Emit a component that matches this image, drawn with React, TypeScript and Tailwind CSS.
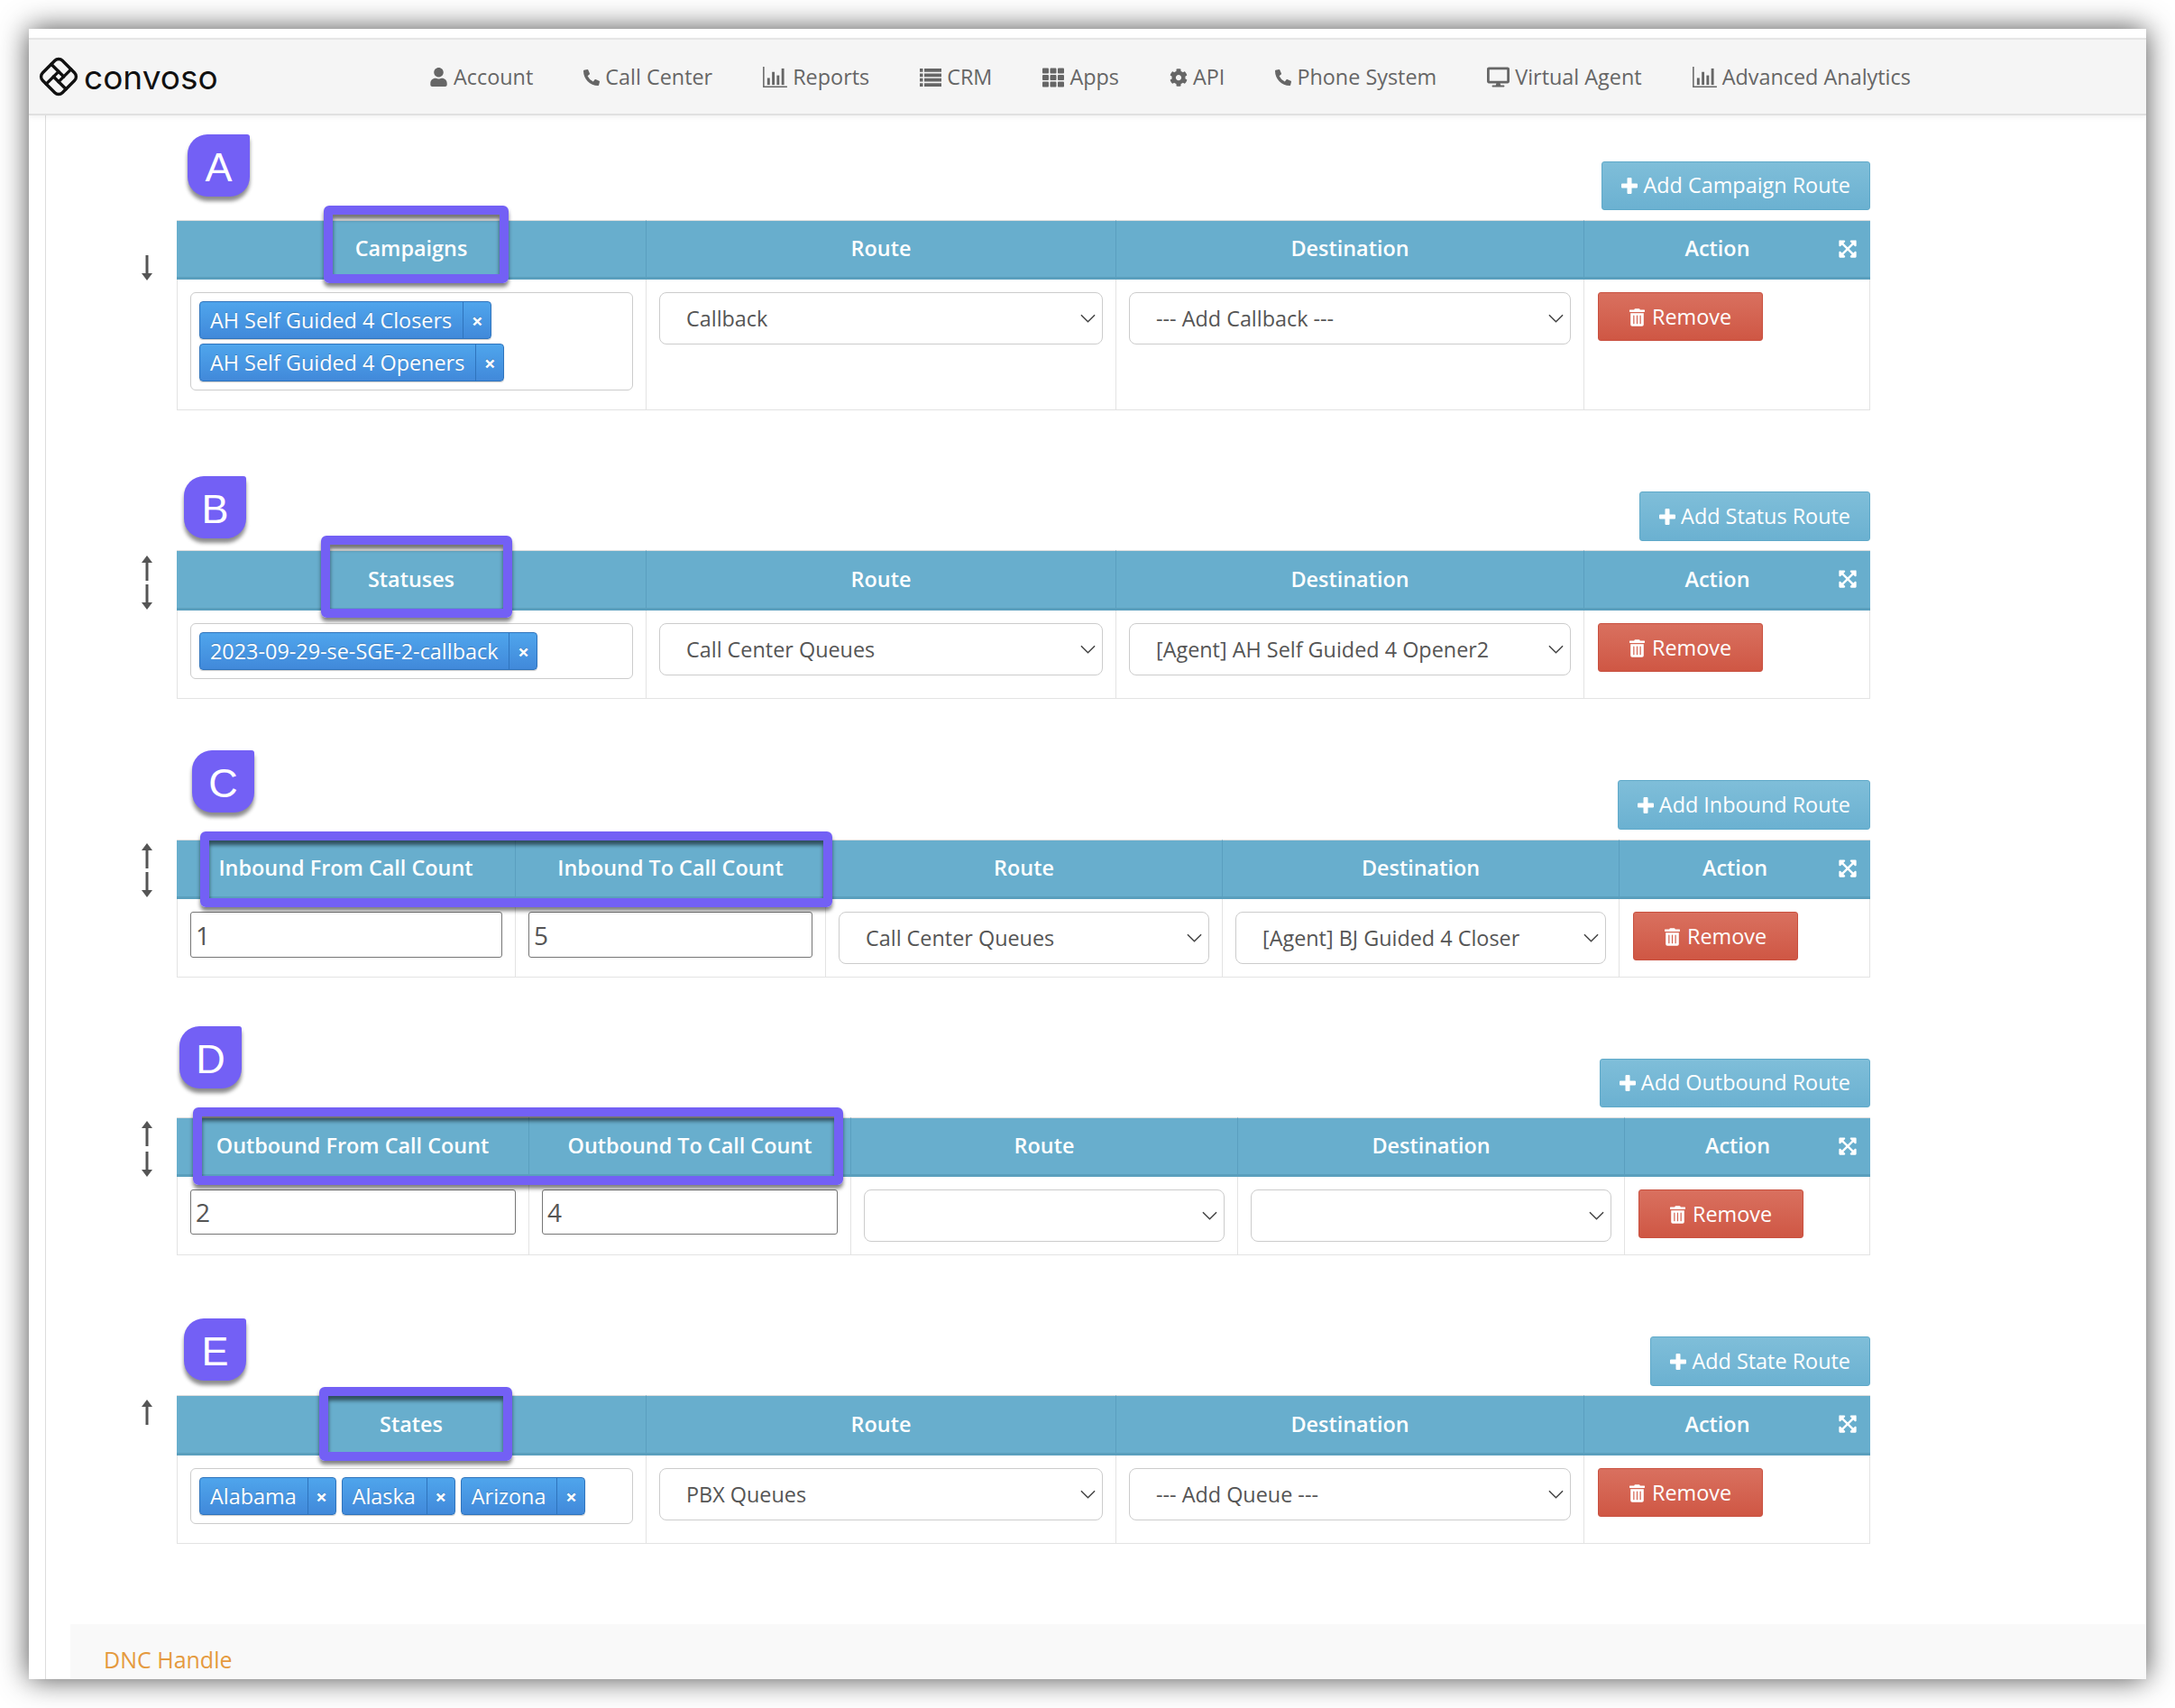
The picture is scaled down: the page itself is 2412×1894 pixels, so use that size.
import React from "react";
import { FaUser, FaPhoneAlt, FaTh, FaCog, FaDesktop, FaTrashAlt, FaExpandArrowsAlt } from "react-icons/fa";

const BarChart = ({ className }: { className?: string }) => (
  <svg viewBox="0 0 28 24" className={className} fill="currentColor">
    <path d="M0 0h1.6v22.4H28V24H0z" />
    <rect x="5" y="13" width="3" height="8" />
    <rect x="10.5" y="6" width="3" height="15" />
    <rect x="16" y="10" width="3" height="11" />
    <rect x="21.5" y="2" width="3" height="19" />
  </svg>
);

const ListIcon = () => (
  <svg viewBox="0 0 24 20" className="w-[24px] h-[20px]" fill="currentColor">
    <path d="M0 0h3.500v3.800H0zM5 0h19v3.800H5zM0 5.400h3.500v3.800H0zM5 5.400h19v3.800H5zM0 10.800h3.500v3.800H0zM5 10.800h19v3.800H5zM0 16.200h3.500V20H0zM5 16.200h19V20H5z" />
  </svg>
);

const Logo = () => (
  <svg viewBox="-22 -22 44 44" className="w-[44px] h-[44px]" fill="none" stroke="#111" strokeWidth="3.4" strokeLinecap="round">
    <g transform="rotate(45)">
      <rect x="-15.500" y="-15.500" width="31" height="31" rx="6" />
      <path d="M-15.500 -4H4" />
      <path d="M4 -15.500V4" />
      <path d="M15.500 4H-4" />
      <path d="M-4 15.500V-4" />
    </g>
  </svg>
);

const PlusIcon = () => (
  <svg viewBox="0 0 18 18" className="w-[18px] h-[18px]" fill="#fff">
    <path d="M6.500 1a1 1 0 0 1 1-1h3a1 1 0 0 1 1 1v5.500h5.500a1 1 0 0 1 1 1v3a1 1 0 0 1-1 1h-5.500V17a1 1 0 0 1-1 1h-3a1 1 0 0 1-1-1v-5.500H1a1 1 0 0 1-1-1v-3a1 1 0 0 1 1-1h5.500z" />
  </svg>
);

const navItems: { label: string; icon: React.ReactNode }[] = [
  { label: "Account", icon: <FaUser className="w-[21px] h-[21px]" /> },
  { label: "Call Center", icon: <FaPhoneAlt className="w-[18px] h-[18px]" /> },
  { label: "Reports", icon: <BarChart className="w-[27px] h-[23px]" /> },
  { label: "CRM", icon: <ListIcon /> },
  { label: "Apps", icon: <FaTh className="w-[24px] h-[24px]" /> },
  { label: "API", icon: <FaCog className="w-[20px] h-[20px]" /> },
  { label: "Phone System", icon: <FaPhoneAlt className="w-[18px] h-[18px]" /> },
  { label: "Virtual Agent", icon: <FaDesktop className="w-[25px] h-[23px]" /> },
  { label: "Advanced Analytics", icon: <BarChart className="w-[27px] h-[23px]" /> },
];

const Arrow = ({ dir }: { dir: "up" | "down" }) => (
  <svg viewBox="0 0 14 28" className="w-[14px] h-[28px]" fill="#555">
    {dir === "up" ? <path d="M7 0l6 8H8.500v20h-3V8H1z" /> : <path d="M7 28l6-8H8.500V0h-3v20H1z" />}
  </svg>
);

const Tag = ({ label }: { label: string }) => (
  <div className="flex h-[42px] items-stretch rounded-[4px] border border-[#2f74bd] bg-gradient-to-b from-[#4fa5ec] to-[#4189da] text-white text-[23.4px] shadow-[0_1px_1px_rgba(0,0,0,0.2)] [text-shadow:0_-1px_0_rgba(0,0,0,0.2)]">
    <span className="pl-[11px] pr-[12px] leading-[40px] whitespace-nowrap">{label}</span>
    <span className="w-[31px] border-l border-[#2f74bd] flex items-center justify-center text-[22px] font-bold leading-none">×</span>
  </div>
);

const Chevron = () => (
  <svg viewBox="0 0 18 10" className="absolute right-[8px] top-[24px] w-[17px] h-[10px] pointer-events-none" fill="none" stroke="#444" strokeWidth="1.6">
    <path d="M1 1l8 8 8-8" />
  </svg>
);

const Select = ({ value }: { value: string }) => (
  <div className="relative h-[58px]">
    <select
      defaultValue={value}
      className="appearance-none w-full h-full rounded-[8px] border border-[#ccc] bg-white pl-[29px] pt-[1px] text-[23.4px] text-[#555]"
    >
      <option value={value}>{value}</option>
    </select>
    <Chevron />
  </div>
);

const CountInput = ({ value, cls }: { value: string; cls: string }) => (
  <input
    defaultValue={value}
    className={`w-full rounded-[3px] border border-[#767676] bg-white pl-[5px] text-[28px] text-[#555] ${cls}`}
  />
);

const RemoveBtn = () => (
  <button className="inline-flex h-[54px] items-center gap-[8px] rounded-[3px] border border-[#c9503f] bg-gradient-to-b from-[#d9705f] to-[#cf5744] px-[34px] pt-[1px] text-[23.4px] text-white">
    <FaTrashAlt className="w-[17px] h-[20px]" />
    Remove
  </button>
);

type Col = { title: string; body: React.ReactNode };
type Section = {
  add: string;
  letter: string;
  mt: string;
  addH: string;
  gap: string;
  badge: string;
  hl: string;
  arrows: string;
  arrowGap: string;
  dirs: ("up" | "down")[];
  cols: string;
  headH: string;
  bodyH: string;
  colsData: Col[];
};

const sections: Section[] = [
  {
    add: "Add Campaign Route", letter: "A", mt: "mt-[51px]", addH: "h-[54px]", gap: "mt-[11px]",
    badge: "left-[12px] -top-[30px]",
    hl: "left-[163px] top-[49px] w-[205px] h-[86px]",
    arrows: "top-[104px]", arrowGap: "gap-[4px]", dirs: ["down"],
    cols: "grid-cols-[521px_521px_519px_317px]", headH: "h-[66px]", bodyH: "h-[145px]",
    colsData: [
      { title: "Campaigns", body: <div className="flex flex-wrap gap-x-[6px] gap-y-[5px] rounded-[6px] border border-[#ccc] p-[9px]"><Tag label="AH Self Guided 4 Closers" /><Tag label="AH Self Guided 4 Openers" /></div> },
      { title: "Route", body: <Select value="Callback" /> },
      { title: "Destination", body: <Select value="--- Add Callback ---" /> },
    ],
  },
  {
    add: "Add Status Route", letter: "B", mt: "mt-[90px]", addH: "h-[55px]", gap: "mt-[10px]",
    badge: "left-[8px] -top-[17px]",
    hl: "left-[160px] top-[49px] w-[212px] h-[91px]",
    arrows: "top-[71px]", arrowGap: "gap-[4px]", dirs: ["up", "down"],
    cols: "grid-cols-[521px_521px_519px_317px]", headH: "h-[67px]", bodyH: "h-[98px]",
    colsData: [
      { title: "Statuses", body: <div className="flex flex-wrap gap-[6px] rounded-[6px] border border-[#ccc] p-[9px]"><Tag label="2023-09-29-se-SGE-2-callback" /></div> },
      { title: "Route", body: <Select value="Call Center Queues" /> },
      { title: "Destination", body: <Select value="[Agent] AH Self Guided 4 Opener2" /> },
    ],
  },
  {
    add: "Add Inbound Route", letter: "C", mt: "mt-[90px]", addH: "h-[55px]", gap: "mt-[11px]",
    badge: "left-[17px] -top-[33px]",
    hl: "left-[26px] top-[57px] w-[701px] h-[84px]",
    arrows: "top-[70px]", arrowGap: "gap-[4px]", dirs: ["up", "down"],
    cols: "grid-cols-[376px_344px_440px_440px_278px]", headH: "h-[66px]", bodyH: "h-[87px]",
    colsData: [
      { title: "Inbound From Call Count", body: <CountInput value="1" cls="h-[51px]" /> },
      { title: "Inbound To Call Count", body: <CountInput value="5" cls="h-[51px]" /> },
      { title: "Route", body: <Select value="Call Center Queues" /> },
      { title: "Destination", body: <Select value="[Agent] BJ Guided 4 Closer" /> },
    ],
  },
  {
    add: "Add Outbound Route", letter: "D", mt: "mt-[90px]", addH: "h-[54px]", gap: "mt-[11px]",
    badge: "left-[3px] -top-[36px]",
    hl: "left-[18px] top-[54px] w-[721px] h-[86px]",
    arrows: "top-[69px]", arrowGap: "gap-[6px]", dirs: ["up", "down"],
    cols: "grid-cols-[391px_357px_429px_429px_272px]", headH: "h-[66px]", bodyH: "h-[87px]",
    colsData: [
      { title: "Outbound From Call Count", body: <CountInput value="2" cls="h-[50px]" /> },
      { title: "Outbound To Call Count", body: <CountInput value="4" cls="h-[50px]" /> },
      { title: "Route", body: <Select value="" /> },
      { title: "Destination", body: <Select value="" /> },
    ],
  },
  {
    add: "Add State Route", letter: "E", mt: "mt-[90px]", addH: "h-[55px]", gap: "mt-[10px]",
    badge: "left-[8px] -top-[20px]",
    hl: "left-[158px] top-[56px] w-[214px] h-[82px]",
    arrows: "top-[70px]", arrowGap: "gap-[4px]", dirs: ["up"],
    cols: "grid-cols-[521px_521px_519px_317px]", headH: "h-[67px]", bodyH: "h-[98px]",
    colsData: [
      { title: "States", body: <div className="flex flex-wrap gap-[6px] rounded-[6px] border border-[#ccc] p-[9px]"><Tag label="Alabama" /><Tag label="Alaska" /><Tag label="Arizona" /></div> },
      { title: "Route", body: <Select value="PBX Queues" /> },
      { title: "Destination", body: <Select value="--- Add Queue ---" /> },
    ],
  },
];

const RouteSection = ({ s }: { s: Section }) => (
  <section className={`relative ml-[145px] w-[1878px] ${s.mt}`}>
    <div className="flex justify-end">
      <button className={`inline-flex items-center gap-[6px] rounded-[3px] border border-[#5fa9c9] bg-gradient-to-b from-[#7fbed9] to-[#6bb1d1] px-[21px] text-[23.4px] text-white ${s.addH}`}>
        <PlusIcon />
        {s.add}
      </button>
    </div>
    <div className={`grid ${s.cols} ${s.gap}`}>
      {s.colsData.map((c) => (
        <div key={c.title} className={`flex items-center justify-center border-t border-t-[#ddd] border-r border-r-[#5a9fbf] border-b-[3px] border-b-[#5a9fbd] bg-[#68aecd] text-[23.4px] font-semibold text-white ${s.headH}`}>
          {c.title}
        </div>
      ))}
      <div className={`relative flex items-center justify-center border-t border-t-[#ddd] border-b-[3px] border-b-[#5a9fbd] bg-[#68aecd] pr-[22px] text-[23.4px] font-semibold text-white ${s.headH}`}>
        Action
        <FaExpandArrowsAlt className="absolute right-[14px] top-[20px] w-[22px] h-[22px]" />
      </div>
      {s.colsData.map((c, i) => (
        <div key={c.title} className={`border-r border-b border-[#e3e3e3] pl-[14px] pr-[14px] pt-[14px] ${s.bodyH} ${i === 0 ? "border-l" : ""}`}>
          {c.body}
        </div>
      ))}
      <div className={`border-r border-b border-[#e3e3e3] px-[15px] pt-[14px] ${s.bodyH}`}>
        <RemoveBtn />
      </div>
    </div>
    <div className={`absolute -left-[40px] flex flex-col ${s.arrows} ${s.arrowGap}`}>
      {s.dirs.map((d) => <Arrow key={d} dir={d} />)}
    </div>
    <div className={`absolute flex h-[69px] w-[69px] items-center justify-center rounded-[22px] rounded-tr-[3px] bg-[#7360f5] pt-[3px] text-[45px] leading-none text-white shadow-[0_5px_4px_rgba(0,0,0,0.45)] [font-family:'Liberation_Sans',sans-serif] ${s.badge}`}>
      {s.letter}
    </div>
    <div className={`absolute rounded-[6px] border-[10px] border-[#7360f5] shadow-[0_4px_4px_rgba(0,0,0,0.5),inset_0_5px_4px_rgba(0,0,0,0.55)] ${s.hl}`} />
  </section>
);

export default function App() {
  return (
    <div className="w-[2412px] h-[1894px] bg-white p-[32px] [font-family:'Open_Sans',sans-serif]">
      <div className="w-[2348px] h-[1830px] bg-white overflow-hidden flex flex-col shadow-[0_0_30px_rgba(0,0,0,0.7)]">
        <div className="relative z-10 mt-[10px] flex h-[86px] shrink-0 items-center border-t-2 border-t-[#e5e5e5] border-b-2 border-b-[#e0e0e0] bg-[#f5f5f5] shadow-[0_2px_6px_rgba(0,0,0,0.06)]">
          <div className="ml-[11px] flex w-[200px] items-center gap-[6px]">
            <Logo />
            <span className="text-[37px] leading-none text-[#111] [font-family:'Inter',sans-serif]">convoso</span>
          </div>
          <nav className="ml-[233px] mt-[2px] flex items-center gap-[56px] text-[23.4px] text-[#666]">
            {navItems.map((n) => (
              <span key={n.label} className="flex items-center gap-[6px] whitespace-nowrap">
                {n.icon}
                {n.label}
              </span>
            ))}
          </nav>
        </div>
        <div className="ml-[18px] flex-1 border-l border-l-[#ddd] flex flex-col">
          {sections.map((s) => <RouteSection key={s.letter} s={s} />)}
          <div className="mt-[89px] ml-[27px] flex-1 bg-[#f9f9f9] pl-[37px] pt-[22px] text-[25px] leading-[34px] text-[#e59a3e]">
            DNC Handle
          </div>
        </div>
      </div>
    </div>
  );
}
